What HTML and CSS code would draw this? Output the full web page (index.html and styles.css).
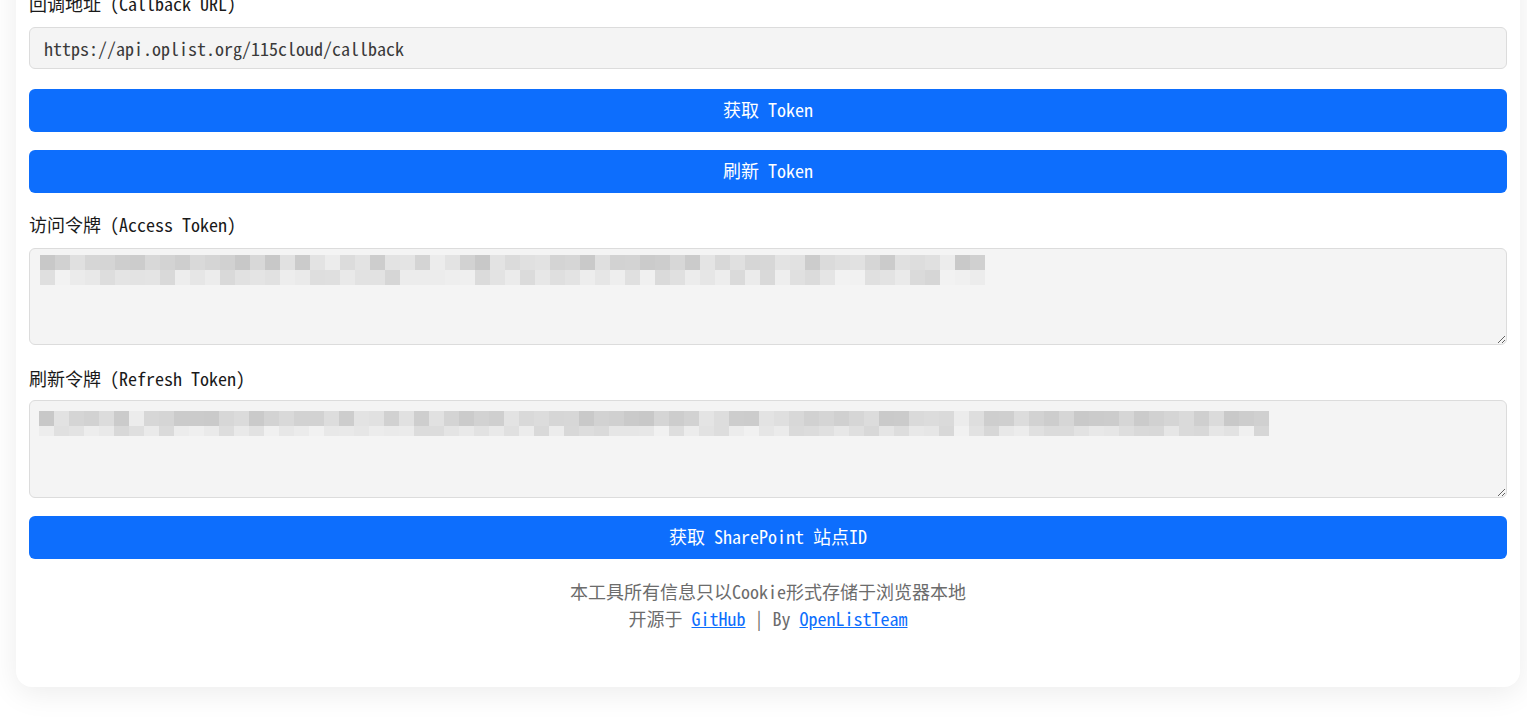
FILE: index.html
```html
<!DOCTYPE html>
<html lang="zh-CN">
<head>
<meta charset="utf-8">
<title>Token 获取工具</title>
<link rel="stylesheet" href="styles.css">
</head>
<body>
<main class="page">
  <section class="card">
    <div class="group group-input">
      <label class="label">回调地址 (Callback URL)</label>
      <div class="input">https://api.oplist.org/115cloud/callback</div>
    </div>
    <button class="btn" type="button">获取 Token</button>
    <button class="btn" type="button">刷新 Token</button>
    <div class="group group-access">
      <label class="label">访问令牌 (Access Token)</label>
      <div class="textarea"><div class="mosaic" data-cols="63" data-rows="15,15" data-seed="11"></div></div>
    </div>
    <div class="group">
      <label class="label label-refresh">刷新令牌 (Refresh Token)</label>
      <div class="textarea textarea-refresh"><div class="mosaic" data-cols="82" data-rows="15,10" data-seed="29"></div></div>
    </div>
    <button class="btn btn-last" type="button">获取 SharePoint 站点ID</button>
    <footer class="footer">
      <p>本工具所有信息只以Cookie形式存储于浏览器本地</p>
      <p>开源于 <a href="#">GitHub</a> | By <a href="#">OpenListTeam</a></p>
    </footer>
  </section>
</main>
<script src="script.js"></script>
</body>
</html>
```

FILE: styles.css
```css
* { box-sizing: border-box; }

html, body {
  margin: 0;
  height: 100%;
  overflow: hidden;
  background: #ffffff;
}

body {
  font-family: "Noto Sans Mono CJK SC", "Noto Sans CJK SC", "DejaVu Sans Mono", monospace;
  font-size: 18px;
  color: #212529;
}

.page {
  padding: 0 7px 35px 16px;
}

.card {
  margin-top: -40px;
  padding: 30px 13px 55px;
  background: #ffffff;
  border-radius: 16px;
  box-shadow: 0 6px 30px rgba(0, 0, 0, 0.08);
}

.group {
  margin-bottom: 18px;
}

.group-input {
  margin-bottom: 20px;
}

.group-access {
  margin-bottom: 20px;
}

.label {
  display: block;
  height: 27px;
  line-height: 27px;
  margin-bottom: 10px;
  color: #1a1a1a;
}

.label-refresh {
  margin-bottom: 8px;
}

.input {
  height: 42px;
  line-height: 40px;
  padding: 0 14px;
  background: #f4f4f4;
  border: 1px solid #dcdcdc;
  border-radius: 6px;
  color: #3a3a3a;
  font-size: 18px;
}

.textarea {
  height: 97px;
  padding: 6px 10px;
  background: #f4f4f4;
  border: 1px solid #dcdcdc;
  border-radius: 6px;
  resize: vertical;
  overflow: auto;
}

.textarea-refresh {
  height: 98px;
  padding: 10px 9px;
}

.mosaic {
  display: flex;
  flex-direction: column;
}

.mosaic-row {
  display: flex;
}

.mosaic-cell {
  flex: 0 0 15px;
  width: 15px;
}

.btn {
  display: block;
  width: 100%;
  height: 43px;
  margin: 0 0 18px;
  padding: 0 0 3px;
  border: 0;
  border-radius: 6px;
  background: #0d6efd;
  color: #ffffff;
  font-family: inherit;
  font-size: 18px;
  font-weight: 500;
  cursor: pointer;
}

.btn-last {
  margin-bottom: 19px;
}

.footer {
  text-align: center;
  color: #6c6c6c;
}

.footer p {
  margin: 0;
  line-height: 27px;
}

.footer a {
  color: #0d6efd;
  text-decoration: underline;
}
```

FILE: script.js
```js
(function () {
  var mosaics = document.querySelectorAll('.mosaic');
  mosaics.forEach(function (m) {
    var cols = parseInt(m.dataset.cols, 10);
    var rows = m.dataset.rows.split(',').map(Number);
    var seed = parseInt(m.dataset.seed, 10);
    function rnd() {
      seed = (seed * 16807) % 2147483647;
      return (seed - 1) / 2147483646;
    }
    rows.forEach(function (h, ri) {
      var row = document.createElement('div');
      row.className = 'mosaic-row';
      row.style.height = h + 'px';
      for (var c = 0; c < cols; c++) {
        var cell = document.createElement('span');
        cell.className = 'mosaic-cell';
        var base = ri === 0 ? 200 : 214;
        var v = Math.round(base + rnd() * 28);
        if (rnd() < 0.03) v = 236;
        cell.style.background = 'rgb(' + v + ',' + v + ',' + v + ')';
        row.appendChild(cell);
      }
      m.appendChild(row);
    });
  });
})();
```
